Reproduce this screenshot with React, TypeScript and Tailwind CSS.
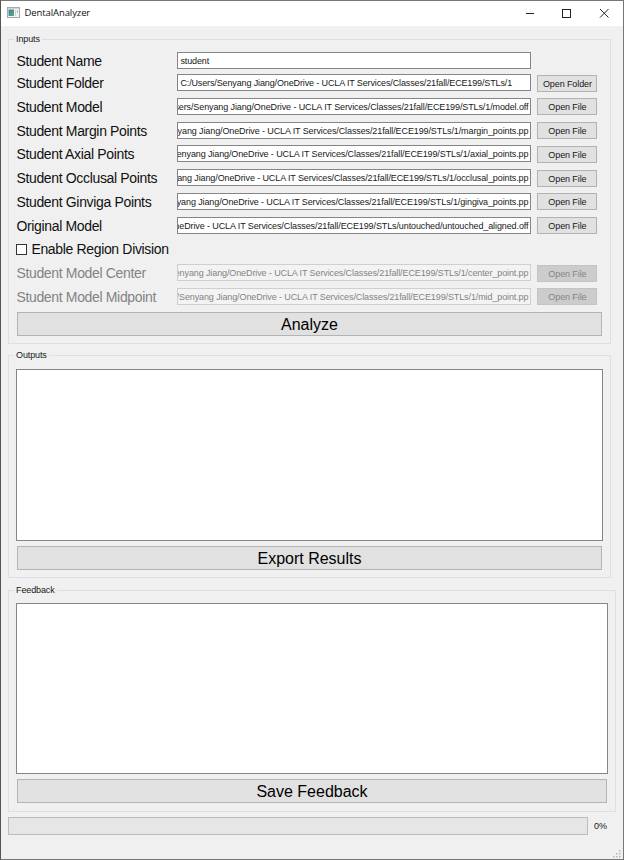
import type { ReactNode } from "react";

const BASE = "/OneDrive - UCLA IT Services/Classes/21fall/ECE199/STLs/";
const HOME = "C:/Users/Senyang Jiang" + BASE;

type RowProps = {
  label: string;
  value: string;
  button?: string;
  disabled?: boolean;
  start?: boolean;
  first?: boolean;
};

function Row({ label, value, button, disabled, start, first }: RowProps) {
  return (
    <div className={`flex items-start ${first ? "h-[22px]" : "h-[23.78px]"}`}>
      <div
        className={`w-[161px] shrink-0 whitespace-nowrap text-[14px] leading-[18px] tracking-[-0.34px] ${
          disabled ? "text-[#838383]" : "text-[#111]"
        }`}
      >
        {label}
      </div>
      <div
        className={`flex h-[17px] w-[354px] shrink-0 overflow-hidden border ${
          start ? "justify-start pl-[2px]" : "justify-end pr-[2px]"
        } ${disabled ? "border-[#cfcfcf] bg-[#f3f3f3] text-[#838383]" : "border-[#858585] bg-white text-[#181818]"}`}
      >
        <span className={`whitespace-nowrap text-[9px] leading-[16px] ${start ? "tracking-[-0.13px]" : "tracking-[-0.11px]"}`}>
          {value}
        </span>
      </div>
      {button && (
        <button
          className={`ml-[6px] mt-[0.5px] h-[17px] w-[60px] shrink-0 whitespace-nowrap border text-[9px] leading-[16px] tracking-[-0.1px] ${
            disabled ? "border-[#c4c4c4] bg-[#cccccc] text-[#858585]" : "border-[#b2b2b2] bg-[#e1e1e1] text-[#181818]"
          }`}
        >
          {button}
        </button>
      )}
    </div>
  );
}

function Group({ title, className, children }: { title: string; className: string; children: ReactNode }) {
  return (
    <section className={`relative border border-[#dfdfdf] ${className}`}>
      <h2 className="absolute -top-[7px] left-[5px] bg-[#f0f0f0] px-[2px] text-[9px] leading-[12px] tracking-[-0.12px] text-[#181818]">
        {title}
      </h2>
      {children}
    </section>
  );
}

function BigButton({ className, children }: { className: string; children: ReactNode }) {
  return (
    <button className={`block h-[24px] border border-[#b4b4b4] bg-[#e1e1e1] text-[16px] leading-[23px] text-black ${className}`}>
      {children}
    </button>
  );
}

export default function App() {
  return (
    <div className="flex h-[860px] w-[624px] flex-col overflow-hidden border border-[#777] border-l-[#555] bg-[#f0f0f0] font-['Liberation_Sans',Arial,sans-serif]">
      <header className="flex h-[25px] shrink-0 items-center bg-white pl-[6px]">
        <svg width="13" height="11" viewBox="0 0 13 11" className="-mt-[2px] shrink-0">
          <defs>
            <linearGradient id="pane" x1="0" y1="0" x2="1" y2="1">
              <stop offset="0" stopColor="#4779a3" />
              <stop offset="1" stopColor="#58ad7c" />
            </linearGradient>
          </defs>
          <rect x="0.5" y="0.5" width="12" height="10" fill="#f4f4f4" stroke="#a5a9ad" />
          <rect x="1" y="1" width="11" height="1" fill="#cdd3d8" />
          <rect x="1.5" y="2.5" width="5.5" height="6.5" fill="url(#pane)" />
          <path d="M8.5 3v6" stroke="#d0d0d0" />
          <path d="M10.5 3v3" stroke="#9fc6ae" />
        </svg>
        <span className="-mt-px ml-[4.5px] w-[66px] whitespace-nowrap font-['Open_Sans','Noto_Sans',sans-serif] text-[9.5px] leading-[14px] tracking-[-0.1px] text-[#111]">
          DentalAnalyzer
        </span>
        <svg width="86" height="12" viewBox="0 0 86 12" className="-mt-[2px] ml-auto mr-[13px] shrink-0" fill="none" stroke="#222" strokeWidth="1">
          <path d="M2 6.5h8" />
          <rect x="38.5" y="2.5" width="8" height="8" />
          <path d="M76 2l8.5 8.5M84.5 2L76 10.5" />
        </svg>
      </header>

      <main className="flex flex-col items-start pl-[7px]">
        <Group title="Inputs" className="mt-[13px] h-[305px] w-[603px] pl-[7.4px] pt-[12px]">
          <Row label="Student Name" value="student" start first />
          <Row label="Student Folder" value={HOME + "1"} button="Open Folder" start />
          <Row label="Student Model" value={HOME + "1/model.off"} button="Open File" />
          <Row label="Student Margin Points" value={HOME + "1/margin_points.pp"} button="Open File" />
          <Row label="Student Axial Points" value={HOME + "1/axial_points.pp"} button="Open File" />
          <Row label="Student Occlusal Points" value={HOME + "1/occlusal_points.pp"} button="Open File" />
          <Row label="Student Ginviga Points" value={HOME + "1/gingiva_points.pp"} button="Open File" />
          <Row label="Original Model" value={HOME + "untouched/untouched_aligned.off"} button="Open File" />
          <label className="flex h-[23.78px] items-start">
            <span className="mt-[4px] size-[11px] border border-[#333] bg-white" />
            <span className="ml-[4px] text-[14px] leading-[18px] tracking-[-0.34px] text-[#111]">
              Enable Region Division
            </span>
          </label>
          <Row label="Student Model Center" value={HOME + "1/center_point.pp"} button="Open File" disabled />
          <Row label="Student Model Midpoint" value={HOME + "1/mid_point.pp"} button="Open File" disabled />
          <BigButton className="ml-[0.6px] w-[585px]">Analyze</BigButton>
        </Group>

        <Group title="Outputs" className="mt-[11px] h-[223px] w-[603px] pl-[7px] pt-[13px]">
          <div className="h-[172px] w-[587px] border border-[#858585] bg-white" />
          <BigButton className="ml-px mt-[5px] w-[585px]">Export Results</BigButton>
        </Group>

        <Group title="Feedback" className="mt-[12px] h-[222px] w-[608px] pl-[7px] pt-[12px]">
          <div className="h-[171px] w-[592px] border border-[#858585] bg-white" />
          <BigButton className="ml-px mt-[5px] w-[590px]">Save Feedback</BigButton>
        </Group>

        <div className="mt-[5px] flex items-center">
          <div className="h-[18px] w-[580px] border border-[#bcbcbc] bg-[#e6e6e6]" />
          <span className="ml-[6px] text-[9px] leading-[12px] text-[#181818]">0%</span>
        </div>
      </main>

      <svg width="8" height="8" viewBox="0 0 8 8" className="mb-px ml-auto mr-[2px] mt-auto shrink-0" fill="#b8b8b8">
        <rect x="6" y="0" width="1.5" height="1.5" />
        <rect x="3" y="3" width="1.5" height="1.5" />
        <rect x="6" y="3" width="1.5" height="1.5" />
        <rect x="0" y="6" width="1.5" height="1.5" />
        <rect x="3" y="6" width="1.5" height="1.5" />
        <rect x="6" y="6" width="1.5" height="1.5" />
      </svg>
    </div>
  );
}
